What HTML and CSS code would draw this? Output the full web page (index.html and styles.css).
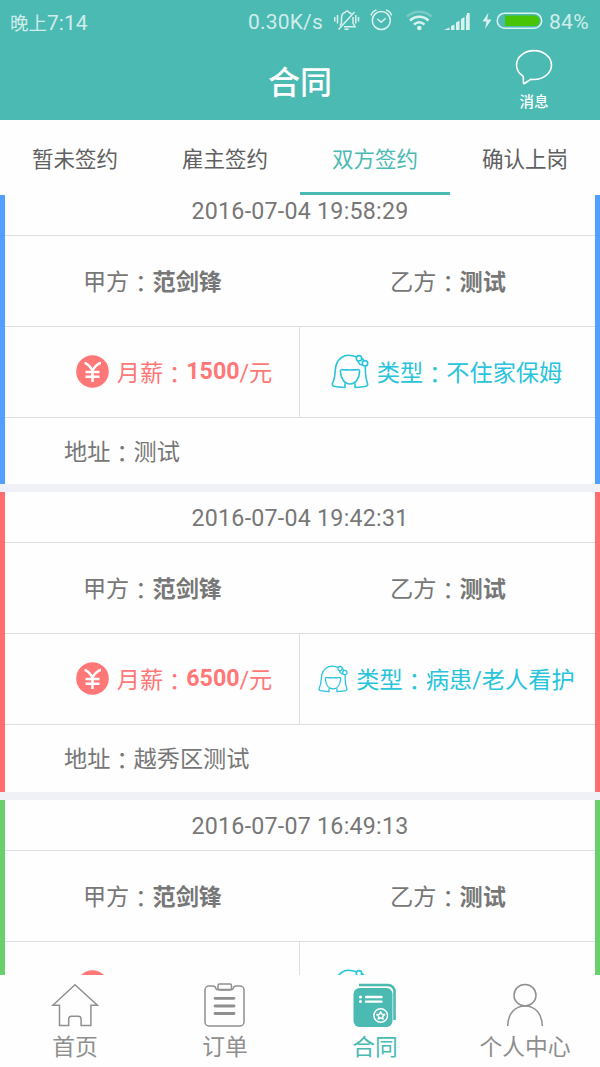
FILE: index.html
```html
<!DOCTYPE html>
<html lang="zh-CN">
<head>
    <meta charset="UTF-8">
    <meta name="viewport" content="width=device-width, initial-scale=1.0">
    <title>合同</title>
    <link rel="stylesheet" href="styles.css">
</head>
<body>
    <!-- общие иконки -->
    <svg class="sprite" width="0" height="0">
        <symbol id="yen" viewBox="0 0 33 33">
            <circle cx="16.5" cy="16.5" r="16.3" fill="#ff7777"/>
            <path d="M8.500 8c2.500 0 4.500 2 8 7.200C20 10 22 8 25 8M16.500 14.500V27M9.500 17h14M9.500 21.800h14" fill="none" stroke="#fff" stroke-width="2.500"/>
        </symbol>
        <symbol id="nanny" viewBox="0 0 38 35">
            <g fill="none" stroke="#29c4dc" stroke-width="1.600" stroke-linejoin="round" stroke-linecap="round">
                <path d="M25.200 2.800C20 .8 14.500.5 10.500 3.500 6 6.800 4.500 11 4.300 16 4 21.500 3.300 25.500 1.500 29.500c-.5 1.700 0 2.200 1.500 2.700 3.500.7 7 1 11 1.300v-3.700"/>
                <path d="M34.300 12.500c0 6.500.5 12.500 2.200 17 .5 1.700 0 2.300-1.500 2.700-3.500.7-7 1-11 1.300v-3.700"/>
                <path d="M11.500 15.600c5 .5 10 .5 15 0 1.500-.2 2.200.6 2.100 2C28.200 25 24.500 30 19 30S9.800 25 9.400 17.600c-.1-1.400.6-2.200 2.100-2z"/>
                <circle cx="28" cy="4.300" r="2.700"/>
                <circle cx="34" cy="9.300" r="2.700"/>
                <path d="M27.200 7c.2 2.200 1.500 3.700 4 4M30.700 4.600c1 .2 1.700.9 2 2"/>
            </g>
        </symbol>
    </svg>

    <header class="header">
        <div class="status">
            <div class="time"><span>晚上</span>7:14</div>
            <div class="speed">0.30K/s</div>
            <svg class="status-icons" width="162" height="24" viewBox="0 0 162 24" fill="none" stroke="#d9f1ef" stroke-width="1.500">
                <!-- звонок -->
                <path d="M6 16.700L7.500 14V9c0-3 1.500-5 3.500-5.500C12 1.500 14 1.500 15 3.500c1 .2 1.800.8 2.300 1.500M19 8v6l2 3.700H10M4.500 20.500L20.500 3M.8 8v4.500M3.500 6v8.500M21.800 6v8.500M24.500 8v4.500M10.500 20.300h4"/>
                <!-- будильник -->
                <circle cx="47.300" cy="11.500" r="9"/>
                <path d="M37 6.500c.7-2.500 2.800-4.700 5.500-5.500M57.600 6.500c-.7-2.500-2.800-4.700-5.500-5.500M43.200 10l4 3.200 4.500-4"/>
                <!-- wi-fi -->
                <path d="M73 7.500c7-6.500 17.500-6.500 24.500 0" stroke-width="2.500" opacity=".3"/>
                <path d="M76 11.500c5.500-5 13-5 18.500 0M80 15.500c3.200-2.700 7.300-2.700 10.500 0" stroke-width="2.500"/>
                <circle cx="85.300" cy="19" r="2.300" fill="#d9f1ef" stroke="none"/>
                <!-- сигнал -->
                <path d="M110 21l5.500-2.500V21zM117 17l3.500-1.500V21H117zM122 13.500l3.500-2V21H122zM127 10l3.500-2v13H127zM132 6.500l3.500-2V21H132z" fill="#d9f1ef" stroke="none"/>
                <path d="M134.200 21V4" stroke-width="2.600"/>
                <path d="M154.500 3.500l-6 9h4l-1.500 7.500 6.500-9.500h-4.300z" fill="#d9f1ef" stroke="none"/>
            </svg>
            <svg width="48" height="18" viewBox="0 0 48 18">
                <rect x="1.200" y="1.200" width="44.500" height="15" rx="7.500" fill="none" stroke="#d9f1ef" stroke-width="1.600"/>
                <path d="M9 3.500h29.500a5.200 5.200 0 0 1 0 10.500H9z" fill="#47c405"/>
            </svg>
            <div class="percent">84%</div>
        </div>
        <div class="titlebar">
            <h1>合同</h1>
            <a class="message">
                <svg width="38" height="37" viewBox="0 0 38 37">
                    <path d="M8.200 27.300C4 24.500 1.500 20.500 1.500 16 1.500 8 9.300 1.600 19 1.600S36.500 8 36.500 16 28.500 30.500 19 30.500c-1 0-2-.1-3-.3l-6.500 4.300c-.6.300-1 .1-1-.6z" fill="none" stroke="#fff" stroke-width="1.600" stroke-linejoin="round"/>
                </svg>
                <span>消息</span>
            </a>
        </div>
    </header>

    <nav class="tabs">
        <a>暂未签约</a>
        <a>雇主签约</a>
        <a class="active">双方签约</a>
        <a>确认上岗</a>
    </nav>

    <main class="list">
        <section class="card blue">
            <div class="date">2016-07-04 19:58:29</div>
            <div class="parties">
                <p>甲方<i lang="zh-TW">：</i><b>范剑锋</b></p>
                <p>乙方<i lang="zh-TW">：</i><b>测试</b></p>
            </div>
            <div class="details">
                <p class="salary"><svg width="33" height="33"><use href="#yen"/></svg>月薪<i lang="zh-TW">：</i><b>1500</b>/元</p>
                <p class="type"><svg width="38" height="35"><use href="#nanny"/></svg>类型<i lang="zh-TW">：</i>不住家保姆</p>
            </div>
            <div class="address">地址<i lang="zh-TW">：</i>测试</div>
        </section>

        <section class="card red">
            <div class="date">2016-07-04 19:42:31</div>
            <div class="parties">
                <p>甲方<i lang="zh-TW">：</i><b>范剑锋</b></p>
                <p>乙方<i lang="zh-TW">：</i><b>测试</b></p>
            </div>
            <div class="details">
                <p class="salary"><svg width="33" height="33"><use href="#yen"/></svg>月薪<i lang="zh-TW">：</i><b>6500</b>/元</p>
                <p class="type"><svg width="30" height="28"><use href="#nanny"/></svg>类型<i lang="zh-TW">：</i>病患/老人看护</p>
            </div>
            <div class="address">地址<i lang="zh-TW">：</i>越秀区测试</div>
        </section>

        <section class="card green">
            <div class="date">2016-07-07 16:49:13</div>
            <div class="parties">
                <p>甲方<i lang="zh-TW">：</i><b>范剑锋</b></p>
                <p>乙方<i lang="zh-TW">：</i><b>测试</b></p>
            </div>
            <div class="details">
                <p class="salary"><svg width="33" height="33"><use href="#yen"/></svg></p>
                <p class="type"><svg width="38" height="35"><use href="#nanny"/></svg></p>
            </div>
        </section>
    </main>

    <footer class="bottom-nav">
        <a>
            <svg width="48" height="46" viewBox="0 0 48 46" fill="none" stroke="#8f8f8f" stroke-width="1.500">
                <path d="M24 1.700L1.800 22.300H8.500V42.500h9.200V36c0-1.800.8-2.700 2.700-2.700h7c1.900 0 2.700.9 2.700 2.700v6.500h9.800V22.300h6.500z"/>
            </svg>
            <span>首页</span>
        </a>
        <a>
            <svg width="48" height="46" viewBox="0 0 48 46" fill="none" stroke="#8f8f8f" stroke-width="1.500">
                <path d="M15 6.500C15 4 14 3 11.500 3H8a4 4 0 0 0-4 4v32a4 4 0 0 0 4 4h31a4 4 0 0 0 4-4V7a4 4 0 0 0-4-4h-3.500C33 3 32 4 32 6.500"/>
                <rect x="17" y="1" width="13.500" height="6" rx="1.500"/>
                <path d="M15 6.500h17"/>
                <path d="M14 15.300h19M14 23h19M14 30.500h19" stroke-width="2.800" stroke-linecap="round"/>
            </svg>
            <span>订单</span>
        </a>
        <a class="active">
            <svg width="48" height="46" viewBox="0 0 48 46" fill="none">
                <path d="M8 2h29a6.500 6.500 0 0 1 6.500 6.500V37" stroke="#4bbab3" stroke-width="2.600"/>
                <rect x="2.500" y="5" width="39" height="39" rx="6" fill="#4bbab3"/>
                <path d="M15 14h15.500M15 18.600h15.500" stroke="#fff" stroke-width="2.400" stroke-linecap="round"/>
                <circle cx="9.500" cy="14" r="1.500" fill="#fff"/>
                <circle cx="9.500" cy="18.600" r="1.500" fill="#fff"/>
                <circle cx="29.700" cy="32.500" r="6.800" stroke="#fff" stroke-width="1.500"/>
                <path d="M29.700 28.900l1.200 2.300 2.600.4-1.900 1.800.5 2.600-2.400-1.200-2.400 1.200.5-2.600-1.900-1.800 2.600-.4z" stroke="#fff" stroke-width="1.500" stroke-linejoin="round"/>
            </svg>
            <span>合同</span>
        </a>
        <a>
            <svg width="48" height="46" viewBox="0 0 48 46" fill="none" stroke="#8f8f8f" stroke-width="1.500">
                <ellipse cx="24" cy="12.200" rx="11" ry="10.700"/>
                <path d="M6.700 43C7 30.500 14 23 24 23S41 30.500 41.300 43"/>
            </svg>
            <span>个人中心</span>
        </a>
    </footer>
</body>
</html>
```
FILE: styles.css
```css
* {
    box-sizing: border-box;
}

body {
    margin: 0;
    height: 100vh;
    display: flex;
    flex-direction: column;
    overflow: hidden;
    background-color: #fefefe;
    color: #777;
    font-family: Roboto, "Noto Sans CJK SC", sans-serif;
    font-size: 23.2px;
}

h1, p {
    margin: 0;
}

svg {
    display: block;
    flex-shrink: 0;
}

.sprite {
    position: absolute;
}

/* двоеточие по центру знака */
i {
    display: inline-block;
    width: 1em;
    font-family: "Noto Sans CJK TC", sans-serif;
    font-style: normal;
    transform: translateY(1.5px);
}

.header {
    height: 120px;
    flex-shrink: 0;
    background-color: #4bbab3;
    color: white;
}

.status {
    height: 44px;
    padding-left: 10px;
    display: flex;
    align-items: center;
    color: #d0edeb;
    font-size: 21px;
}

.time {
    width: 238px;
}

.time span {
    font-size: 18.5px;
}

.speed {
    width: 86px;
    letter-spacing: 0.2px;
}

.status svg {
    margin-bottom: 2px;
}

.percent {
    margin-left: 5px;
    letter-spacing: 0.3px;
}

.titlebar {
    height: 76px;
    display: grid;
    grid-template-columns: 1fr 66px 1fr;
}

.titlebar h1 {
    grid-column: 2;
    font-size: 32px;
    font-weight: 500;
    line-height: 78px;
    text-align: center;
    white-space: nowrap;
}

.message {
    width: 60px;
    margin: 5px 0 0 171px;
    justify-self: start;
    display: flex;
    flex-direction: column;
    align-items: center;
    font-size: 14.5px;
    font-weight: 500;
    line-height: 20px;
}

.message span {
    margin-top: 7px;
}

.tabs {
    height: 75px;
    flex-shrink: 0;
    display: flex;
    color: #606060;
    font-size: 21.5px;
}

.tabs a {
    flex: 1;
    line-height: 79px;
    text-align: center;
}

.tabs .active {
    color: #4bbab3;
    border-bottom: 3px solid #4bbab3;
}

.list {
    flex: 1;
    min-height: 0;
    overflow: hidden;
    background-color: #f0f1f6;
}

.card {
    height: 299.5px;
    margin-bottom: 8px;
    background-color: #fefefe;
    border-left: 5px solid;
    border-right: 5px solid;
}

/* список немного прокручен */
.card:first-child {
    margin-top: -10.2px;
}

.blue {
    border-color: #519fff;
}

.red {
    border-color: #ff6e6e;
}

.green {
    border-color: #68d06c;
}

.date {
    height: 51px;
    padding-top: 1px;
    border-bottom: 1px solid #dedede;
    line-height: 50px;
    text-align: center;
    letter-spacing: 0.25px;
}

.parties, .details {
    height: 91px;
    display: grid;
    grid-template-columns: 1fr 1fr;
    border-bottom: 1px solid #dedede;
}

.parties p {
    line-height: 89px;
    text-align: center;
}

.parties p:last-child {
    padding-left: 1px;
}

.details p {
    padding-bottom: 2px;
    display: flex;
    align-items: center;
    justify-content: center;
}

.details svg {
    margin-top: 1px;
    margin-right: 8px;
}

.details .salary {
    padding-left: 44px;
    border-right: 1px solid #dedede;
    color: #ff7777;
}

.details .type {
    padding-right: 2px;
    color: #29c4dc;
}

.address {
    padding-left: 59px;
    line-height: 65px;
}

/* в третьей карточке видны только верхушки иконок */
.green .details p {
    justify-content: flex-start;
}

.green .details .salary {
    padding-left: 71px;
}

.green .details .type {
    padding-left: 31px;
}

.bottom-nav {
    height: 92px;
    flex-shrink: 0;
    display: flex;
    color: #8f8f8f;
    font-size: 22.8px;
}

.bottom-nav a {
    flex: 1;
    padding-top: 8px;
    display: flex;
    flex-direction: column;
    align-items: center;
}

.bottom-nav span {
    line-height: 37px;
}

.bottom-nav .active {
    color: #4bbab3;
}
```
